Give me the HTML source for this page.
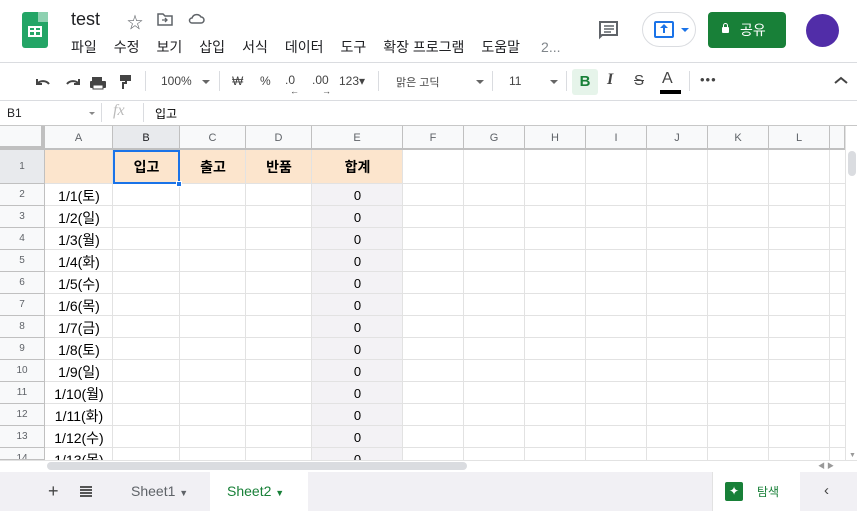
<!DOCTYPE html>
<html><head><meta charset="utf-8"><style>
*{box-sizing:border-box;margin:0;padding:0}
body{width:857px;height:511px;overflow:hidden;background:#fff;font-family:"Liberation Sans","Noto Sans CJK KR",sans-serif;position:relative;color:#3c4043}
.a{position:absolute}
.menu span{margin-right:17px}
.hl{position:absolute;background:#c7c7c7}
.ch{position:absolute;top:126px;height:24px;font-size:11px;color:#5f6368;text-align:center;line-height:24px;background:#f8f9fa;border-right:1px solid #c0c0c0}
.rh{position:absolute;left:0;width:45px;font-size:10px;color:#5f6368;text-align:center;background:#f8f9fa;border-bottom:1px solid #c0c0c0;border-right:1px solid #c0c0c0}
.c{position:absolute;font-size:13px;color:#000;text-align:center}
</style></head><body>
<div class="a" style="left:22px;top:12px;width:26px;height:36px;background:#23a566;border-radius:3px"></div>
<div class="a" style="left:38px;top:12px;width:10px;height:10px;background:#8ed1b1"></div>
<div class="a" style="left:28px;top:26px;width:14px;height:11px;border:2px solid #fff;"></div>
<div class="a" style="left:28px;top:30px;width:14px;height:2px;background:#fff"></div>
<div class="a" style="left:34px;top:26px;width:2px;height:11px;background:#fff"></div>
<div class="a" style="left:71px;top:9px;font-size:18px;color:#202124">test</div>
<div class="a" style="left:127px;top:9px;font-size:16px;color:#5f6368">☆</div>
<svg class="a" style="left:157px;top:12px" width="16" height="14"><path d="M1 2h5l2 2h7v9H1z" fill="none" stroke="#5f6368" stroke-width="1.5"/><path d="M5 8h5M8 6l2 2-2 2" stroke="#5f6368" fill="none" stroke-width="1.3"/></svg>
<svg class="a" style="left:188px;top:12px" width="17" height="13"><path d="M4 11h9a3 3 0 0 0 0-6 5 5 0 0 0-9 1 2.5 2.5 0 0 0 0 5z" fill="none" stroke="#5f6368" stroke-width="1.5"/></svg>
<div class="a menu" style="left:71px;top:37px;font-size:14px;color:#202124;white-space:nowrap"><span>파일</span><span>수정</span><span>보기</span><span>삽입</span><span>서식</span><span>데이터</span><span>도구</span><span>확장 프로그램</span><span>도움말</span><span style="color:#80868b;margin-left:4px">2...</span></div>
<svg class="a" style="left:598px;top:20px" width="22" height="20"><path d="M2 2h17v13H4l-2 2z" fill="none" stroke="#5f6368" stroke-width="2"/><path d="M6 6h10M6 9h10M6 12h7" stroke="#5f6368" stroke-width="1.5"/></svg>
<div class="a" style="left:642px;top:12px;width:54px;height:35px;border:1px solid #dadce0;border-radius:18px"></div>
<div class="a" style="left:654px;top:21px;width:20px;height:17px;border:2px solid #1a73e8;border-radius:2px"></div>
<div class="a" style="left:663px;top:25px;width:2px;height:8px;background:#1a73e8"></div>
<div class="a" style="left:660px;top:24px;width:0;height:0;border-left:4px solid transparent;border-right:4px solid transparent;border-bottom:4px solid #1a73e8"></div>
<div class="a" style="left:681px;top:28px;border-left:4px solid transparent;border-right:4px solid transparent;border-top:4px solid #1a73e8"></div>
<div class="a" style="left:708px;top:12px;width:78px;height:36px;background:#188038;border-radius:4px;color:#fff;font-size:14px;line-height:36px;padding-left:32px">공유</div>
<div class="a" style="left:722px;top:27px;width:7px;height:6px;background:#fff;border-radius:1px"></div>
<div class="a" style="left:723px;top:23px;width:5px;height:6px;border:1.5px solid #fff;border-radius:3px 3px 0 0"></div>
<div class="a" style="left:806px;top:14px;width:33px;height:33px;border-radius:50%;background:#512da8"></div>
<div class="hl" style="left:0;top:62px;width:857px;height:1px;background:#dadce0"></div>
<svg class="a" style="left:34px;top:74px" width="100" height="16"><path d="M3 5v5h5M3 10a7 6 0 0 1 12 0" fill="none" stroke="#444" stroke-width="2"/><path d="M45 5v5h-5M45 10a7 6 0 0 0-12 0" fill="none" stroke="#444" stroke-width="2"/><rect x="58" y="3" width="10" height="4" fill="#444"/><rect x="56" y="7" width="16" height="7" fill="#444" rx="1"/><rect x="59" y="11" width="10" height="4" fill="#fff" stroke="#444"/><rect x="86" y="1" width="11" height="6" fill="#444"/><path d="M92 7v2h-3v6" stroke="#444" stroke-width="2" fill="none"/></svg>
<div class="a" style="left:145px;top:71px;width:1px;height:20px;background:#dadce0"></div>
<div class="a" style="left:161px;top:74px;font-size:12px;color:#444">100%</div>
<div class="a" style="left:202px;top:80px;border-left:4px solid transparent;border-right:4px solid transparent;border-top:4px solid #666"></div>
<div class="a" style="left:219px;top:71px;width:1px;height:20px;background:#dadce0"></div>
<div class="a" style="left:232px;top:74px;font-size:12px;color:#444">₩</div>
<div class="a" style="left:260px;top:74px;font-size:12px;color:#444">%</div>
<div class="a" style="left:285px;top:73px;font-size:12px;color:#444">.0</div>
<div class="a" style="left:312px;top:73px;font-size:12px;color:#444">.00</div>
<div class="a" style="left:290px;top:86px;font-size:9px;color:#444">←</div>
<div class="a" style="left:322px;top:86px;font-size:9px;color:#444">→</div>
<div class="a" style="left:339px;top:74px;font-size:12px;color:#444">123▾</div>
<div class="a" style="left:378px;top:71px;width:1px;height:20px;background:#dadce0"></div>
<div class="a" style="left:396px;top:74px;font-size:11px;color:#444">맑은 고딕</div>
<div class="a" style="left:476px;top:80px;border-left:4px solid transparent;border-right:4px solid transparent;border-top:4px solid #666"></div>
<div class="a" style="left:492px;top:71px;width:1px;height:20px;background:#dadce0"></div>
<div class="a" style="left:509px;top:74px;font-size:12px;color:#444">11</div>
<div class="a" style="left:550px;top:80px;border-left:4px solid transparent;border-right:4px solid transparent;border-top:4px solid #666"></div>
<div class="a" style="left:566px;top:71px;width:1px;height:20px;background:#dadce0"></div>
<div class="a" style="left:572px;top:69px;width:26px;height:26px;background:#e6f4ea;border-radius:3px;color:#188038;font-weight:bold;font-size:15px;text-align:center;line-height:26px">B</div>
<div class="a" style="left:607px;top:71px;font-size:16px;font-style:italic;font-family:'Liberation Serif',serif;color:#444;font-weight:bold">I</div>
<div class="a" style="left:634px;top:72px;font-size:15px;color:#444;text-decoration:line-through">S</div>
<div class="a" style="left:662px;top:70px;font-size:16px;color:#444">A</div>
<div class="a" style="left:660px;top:90px;width:21px;height:4px;background:#000"></div>
<div class="a" style="left:689px;top:71px;width:1px;height:20px;background:#dadce0"></div>
<div class="a" style="left:700px;top:72px;font-size:13px;color:#444;letter-spacing:1px">•••</div>
<svg class="a" style="left:834px;top:76px" width="14" height="9"><path d="M1 7l6-5 6 5" fill="none" stroke="#444" stroke-width="2"/></svg>
<div class="hl" style="left:0;top:100px;width:857px;height:1px;background:#dadce0"></div>
<div class="a" style="left:7px;top:106px;font-size:12px;color:#202124">B1</div>
<div class="a" style="left:89px;top:112px;border-left:3px solid transparent;border-right:3px solid transparent;border-top:3px solid #888"></div>
<div class="a" style="left:101px;top:103px;width:1px;height:19px;background:#dadce0"></div>
<div class="a" style="left:113px;top:102px;font-size:16px;font-style:italic;font-family:'Liberation Serif',serif;color:#bbb">fx</div>
<div class="a" style="left:143px;top:103px;width:1px;height:19px;background:#dadce0"></div>
<div class="a" style="left:155px;top:105px;font-size:12px;color:#000">입고</div>
<div class="hl" style="left:0;top:125px;width:857px;height:1px"></div>
<div class="a" style="left:45px;top:150px;width:358px;height:34px;background:#fce5cd"></div>
<div class="a" style="left:312px;top:184px;width:91px;height:276px;background:#f3f2f5"></div>
<div class="a" style="left:0;top:126px;width:45px;height:24px;background:#f8f9fa;border-right:4px solid #c0c0c0;border-bottom:4px solid #c0c0c0"></div>
<div id="cols"></div>
<div class="a" style="left:45px;top:148px;width:800px;height:2px;background:#c0c0c0"></div>
<script>
var xs=[45,113,180,246,312,403,464,525,586,647,708,769,830,845];var L="ABCDEFGHIJKL";var h='';
for(var i=0;i<12;i++){h+='<div class="ch" style="left:'+xs[i]+'px;width:'+(xs[i+1]-xs[i])+'px;'+(i==1?'background:#e8eaed;color:#202124':'')+'">'+L[i]+'</div>';
h+='<div class="a" style="left:'+(xs[i+1]-1)+'px;top:150px;width:1px;height:310px;background:#e2e2e2"></div>';}
h+='<div class="ch" style="left:830px;width:15px"></div>';
var days=['토','일','월','화','수','목','금','토','일','월','화','수','목'];
h+='<div class="rh" style="top:150px;height:34px;line-height:34px;background:#e8eaed">1</div>';
for(var r=2;r<=14;r++){var y=184+(r-2)*22;var hh=Math.min(22,460-y);
h+='<div class="rh" style="top:'+y+'px;height:'+hh+'px;line-height:22px;overflow:hidden">'+r+'</div>';
h+='<div class="a" style="left:45px;top:'+(y-1)+'px;width:800px;height:1px;background:#e2e2e2"></div>';
h+='<div class="c" style="left:45px;width:68px;top:'+(y+2)+'px;height:'+(hh-2)+'px;overflow:hidden;font-size:14px">1/'+(r-1)+'('+days[r-2]+')</div>';
h+='<div class="c" style="left:312px;width:91px;top:'+(y+4)+'px;height:'+(hh-4)+'px;overflow:hidden">0</div>';}
var t=['입고','출고','반품','합계'];for(var k=0;k<4;k++)h+='<div class="c" style="left:'+xs[k+1]+'px;width:'+(xs[k+2]-xs[k+1])+'px;top:157px;font-weight:bold;font-size:14px">'+t[k]+'</div>';
document.getElementById('cols').innerHTML=h;
</script>
<div class="a" style="left:113px;top:150px;width:67px;height:34px;border:2px solid #1a73e8"></div>
<div class="a" style="left:176px;top:181px;width:6px;height:6px;background:#1a73e8;border:1px solid #fff"></div>
<div class="a" style="left:845px;top:126px;width:12px;height:334px;background:#fff;border-left:1px solid #e2e2e2"></div>
<div class="a" style="left:848px;top:151px;width:8px;height:25px;background:#dadce0;border-radius:4px"></div>
<div class="a" style="left:849px;top:452px;font-size:7px;color:#999">▼</div>
<div class="a" style="left:0;top:460px;width:857px;height:12px;background:#fff;border-top:1px solid #e2e2e2"></div>
<div class="a" style="left:47px;top:462px;width:420px;height:8px;background:#dadce0;border-radius:4px"></div>
<div class="a" style="left:818px;top:461px;font-size:7px;color:#999">◀ ▶</div>
<div class="a" style="left:0;top:472px;width:857px;height:39px;background:#f1f0f4"></div>
<div class="a" style="left:48px;top:481px;font-size:18px;color:#444">+</div>
<div class="a" style="left:80px;top:486px;width:12px;height:2px;background:#555;box-shadow:0 3px 0 #555,0 6px 0 #555,0 9px 0 #555"></div>
<div class="a" style="left:131px;top:483px;font-size:14px;color:#5f6368">Sheet1 <span style="font-size:9px">▼</span></div>
<div class="a" style="left:210px;top:472px;width:98px;height:39px;background:#fff"></div>
<div class="a" style="left:227px;top:483px;font-size:14px;color:#188038">Sheet2 <span style="font-size:9px">▼</span></div>
<div class="a" style="left:712px;top:472px;width:88px;height:39px;background:#fff;border-left:1px solid #e2e2e2"></div>
<div class="a" style="left:725px;top:482px;width:18px;height:19px;background:#188038;border-radius:2px;color:#fff;text-align:center;font-size:12px;line-height:19px">✦</div>
<div class="a" style="left:757px;top:483px;font-size:12px;color:#188038">탐색</div>
<div class="a" style="left:824px;top:482px;font-size:15px;color:#444">‹</div>
</body></html>
